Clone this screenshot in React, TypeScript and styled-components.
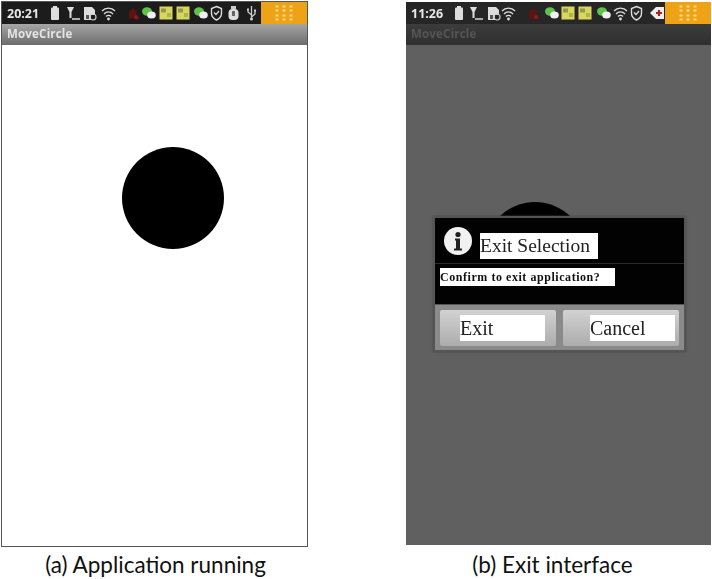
import React from 'react';
import styled, { createGlobalStyle } from 'styled-components';

const GlobalStyle = createGlobalStyle`
  html, body {
    margin: 0;
    padding: 0;
    background: #fff;
  }
  #root {
    width: 712px;
    height: 579px;
    overflow: hidden;
  }
`;

const Page = styled.div`
  display: grid;
  grid-template-columns: 309px 305px;
  justify-content: space-between;
  width: 712px;
  height: 579px;
  padding: 1px 1px 0 0;
  box-sizing: border-box;
  font-family: 'Lato', 'Open Sans', sans-serif;
`;

const Figure = styled.figure<{ $top: number }>`
  margin: 0;
  padding-top: ${(p) => p.$top}px;
  display: flex;
  flex-direction: column;
  align-items: center;
`;

const Phone = styled.div<{ $dim?: boolean }>`
  position: relative;
  width: ${(p) => (p.$dim ? 305 : 307)}px;
  height: ${(p) => (p.$dim ? 543 : 546)}px;
  box-sizing: border-box;
  display: flex;
  flex-direction: column;
  overflow: hidden;
  background: ${(p) => (p.$dim ? '#606060' : '#fff')};
  border: ${(p) => (p.$dim ? 'none' : '1px solid #555')};
`;

const StatusBar = styled.div<{ $dim?: boolean }>`
  height: 22px;
  flex: none;
  display: flex;
  align-items: center;
  background: ${(p) => (p.$dim ? '#262626' : '#1c1c1c')};
  color: #eee;
  padding-left: 5px;
`;

const Clock = styled.span`
  font: bold 12.5px 'Open Sans', sans-serif;
  color: #e8e8e8;
  width: 43px;
  flex: none;
  filter: blur(0.3px);
`;

const Tray = styled.div`
  flex: 1;
  display: flex;
  align-items: center;
  filter: blur(0.5px);
`;

const NotifyTile = styled.div`
  flex: none;
  width: 46px;
  height: 22px;
  background: #eda315;
  display: flex;
  align-items: center;
  justify-content: center;
`;

const TitleBar = styled.div<{ $dim?: boolean }>`
  height: 21px;
  flex: none;
  box-sizing: border-box;
  padding: 2px 0 0 5px;
  font: bold 11.5px 'Open Sans', sans-serif;
  letter-spacing: 0.2px;
  color: ${(p) => (p.$dim ? '#555' : '#e4e4e4')};
  background: ${(p) =>
    p.$dim
      ? 'linear-gradient(#3c3c3c, #2f2f2f)'
      : 'linear-gradient(#a6a6a6, #6c6c6c)'};
  filter: blur(0.4px);
`;

const Circle = styled.div<{ $x: number; $y: number }>`
  position: absolute;
  left: ${(p) => p.$x}px;
  top: ${(p) => p.$y}px;
  width: 102px;
  height: 102px;
  border-radius: 50%;
  background: #000;
`;

const Dialog = styled.div`
  position: absolute;
  left: 27px;
  top: 214px;
  width: 253px;
  height: 136px;
  box-sizing: border-box;
  padding: 2px;
  background: #555;
  display: flex;
  flex-direction: column;
  font-family: 'Liberation Serif', serif;
  box-shadow: 0 0 2px #444;
  filter: blur(0.35px);
`;

const DialogBody = styled.div`
  height: 86px;
  flex: none;
  background: #020202;
  display: flex;
  flex-direction: column;
`;

const DialogHeader = styled.div`
  height: 46px;
  flex: none;
  box-sizing: border-box;
  padding: 15px 0 0 8px;
  display: flex;
  gap: 7px;
  border-bottom: 1px solid #2b2b2b;
`;

const InfoIcon = styled.svg`
  width: 30px;
  height: 30px;
  flex: none;
  margin-top: -7px;
`;

const DialogTitle = styled.div`
  width: 118px;
  height: 26px;
  background: #fff;
  color: #222;
  font-size: 19.5px;
  line-height: 25px;
  white-space: nowrap;
`;

const Message = styled.div`
  width: 175px;
  height: 18px;
  margin: 4px 0 0 5px;
  background: #fff;
  color: #111;
  font-size: 12px;
  font-weight: bold;
  letter-spacing: 0.55px;
  line-height: 18px;
  white-space: nowrap;
`;

const ButtonBar = styled.div`
  flex: 1;
  margin-top: 1px;
  background: #8a8a8a;
  display: grid;
  grid-template-columns: 1fr 1fr;
  gap: 7px;
  padding: 5px 5px 4px;
`;

const DialogButton = styled.div<{ $inset: number }>`
  box-sizing: border-box;
  display: flex;
  align-items: center;
  justify-content: flex-end;
  background: linear-gradient(#d2d2d2, #acacac);
  border-radius: 2px;
  padding-right: ${(p) => p.$inset}px;
`;

const ButtonLabel = styled.div`
  width: 85px;
  height: 26px;
  background: #fff;
  color: #222;
  font-size: 20px;
  line-height: 27px;
`;

const Caption = styled.figcaption<{ $shift: number; $gap: number }>`
  margin-top: ${(p) => p.$gap}px;
  font-size: 22.5px;
  line-height: 30px;
  color: #111;
  white-space: nowrap;
  transform: translateX(${(p) => p.$shift}px);
`;

const Icon = styled.svg<{ $w: number; $gap?: number }>`
  width: ${(p) => p.$w}px;
  height: 18px;
  flex: none;
  margin-right: ${(p) => p.$gap ?? 3}px;
`;

type IconProps = { gap?: number };

const Battery = ({ gap }: IconProps) => (
  <Icon $w={10} $gap={gap} viewBox="0 0 10 18">
    <rect x="3" y="2" width="4" height="2" fill="#ddd" />
    <rect x="1" y="3.5" width="8" height="12.5" rx="1" fill="#ddd" />
  </Icon>
);

const Signal = ({ gap }: IconProps) => (
  <Icon $w={14} $gap={gap} viewBox="0 0 14 18">
    <path d="M1 3h7L5.5 8v6h-2V8z" fill="#ddd" />
    <rect x="6" y="14" width="8" height="2" fill="#aaa" />
  </Icon>
);

const SdCard = ({ gap }: IconProps) => (
  <Icon $w={14} $gap={gap} viewBox="0 0 14 18">
    <path d="M1 3h8l3 3v5H8v5H1z" fill="#ddd" />
    <circle cx="10" cy="13" r="3" fill="none" stroke="#ccc" strokeWidth="1.2" />
    <rect x="3" y="11" width="3" height="4" fill="#555" />
  </Icon>
);

const Wifi = ({ gap }: IconProps) => (
  <Icon $w={15} $gap={gap} viewBox="0 0 15 18">
    <g fill="none" stroke="#ddd" strokeWidth="1.3">
      <path d="M1 7a9 9 0 0 1 13 0" />
      <path d="M3 10a6 6 0 0 1 9 0" />
      <path d="M5 12.5a3.4 3.4 0 0 1 5 0" />
    </g>
    <circle cx="7.5" cy="15" r="1.4" fill="#ddd" />
  </Icon>
);

const RedBlob = ({ gap }: IconProps) => (
  <Icon $w={15} $gap={gap} viewBox="0 0 15 18">
    <path d="M3 8l4-4 4 3-1 4 4 3-4 2-3-2-4 1z" fill="#5e1212" />
    <circle cx="10" cy="13" r="2" fill="#8e1a1a" />
  </Icon>
);

const Chat = ({ gap }: IconProps) => (
  <Icon $w={15} $gap={gap} viewBox="0 0 15 18">
    <ellipse cx="6" cy="7.5" rx="5" ry="4.2" fill="#5fc24a" />
    <ellipse cx="10.5" cy="11" rx="4.3" ry="3.6" fill="#f0f0f0" />
  </Icon>
);

const Tile = ({ gap }: IconProps) => (
  <Icon $w={14} $gap={gap} viewBox="0 0 14 18">
    <rect x="0.5" y="2.5" width="13" height="13" fill="#d9d65c" />
    <rect x="2" y="4.5" width="5" height="4" fill="#8d9a55" />
    <rect x="8" y="9" width="4" height="4" fill="#a9b64f" />
  </Icon>
);

const Shield = ({ gap }: IconProps) => (
  <Icon $w={13} $gap={gap} viewBox="0 0 13 18">
    <path
      d="M6.5 2.5l5 2v5c0 3-2 5-5 6.5-3-1.5-5-3.5-5-6.5v-5z"
      fill="none"
      stroke="#ddd"
      strokeWidth="1.4"
    />
    <path d="M4 8.5l2 2 3-3.5" fill="none" stroke="#ddd" strokeWidth="1.2" />
  </Icon>
);

const Plug = ({ gap }: IconProps) => (
  <Icon $w={13} $gap={gap} viewBox="0 0 13 18">
    <rect x="4" y="2" width="5" height="3" fill="#ccc" />
    <rect x="1.5" y="5" width="10" height="11" rx="4" fill="#ddd" />
    <rect x="5" y="7" width="3" height="5" fill="#666" />
  </Icon>
);

const Usb = ({ gap }: IconProps) => (
  <Icon $w={11} $gap={gap} viewBox="0 0 11 18">
    <path
      d="M5.5 2v14M5.5 11L2 8V6M5.5 13l3.5-3V7"
      fill="none"
      stroke="#ccc"
      strokeWidth="1.3"
    />
    <circle cx="5.5" cy="15" r="1.5" fill="#ccc" />
    <rect x="1" y="4.5" width="2" height="2" fill="#ccc" />
    <rect x="8" y="5.5" width="2" height="2" fill="#ccc" />
  </Icon>
);

const Alert = ({ gap }: IconProps) => (
  <Icon $w={16} $gap={gap} viewBox="0 0 16 18">
    <path d="M1 9l6-6h8v12H7z" fill="#eee" />
    <path d="M7 9h6M10 6v6" stroke="#a52222" strokeWidth="2.2" />
  </Icon>
);

const DotGrid = () => (
  <svg width="18" height="16" viewBox="0 0 18 16">
    {[1.5, 5.5, 10.5, 14.5].flatMap((y) =>
      [2, 9, 16].map((x) => (
        <rect key={`${x}-${y}`} x={x - 1.5} y={y - 1} width="3" height="2" fill="#f5d98a" />
      )),
    )}
  </svg>
);

export default function App() {
  return (
    <>
      <GlobalStyle />
      <Page>
        <Figure $top={0}>
          <Phone>
            <StatusBar>
              <Clock>20:21</Clock>
              <Tray>
                <Battery gap={6} />
                <Signal gap={3} />
                <SdCard gap={4} />
                <Wifi gap={10} />
                <RedBlob gap={0} />
                <Chat gap={3} />
                <Tile gap={3} />
                <Tile gap={3} />
                <Chat gap={2} />
                <Shield gap={4} />
                <Plug gap={6} />
                <Usb gap={0} />
              </Tray>
              <NotifyTile>
                <DotGrid />
              </NotifyTile>
            </StatusBar>
            <TitleBar>MoveCircle</TitleBar>
            <Circle $x={120} $y={145} />
          </Phone>
          <Caption $shift={1} $gap={3}>
            (a) Application running
          </Caption>
        </Figure>

        <Figure $top={1}>
          <Phone $dim>
            <StatusBar $dim>
              <Clock>11:26</Clock>
              <Tray>
                <Battery gap={5} />
                <Signal gap={4} />
                <SdCard gap={0} />
                <Wifi gap={10} />
                <RedBlob gap={3} />
                <Chat gap={2} />
                <Tile gap={3} />
                <Tile gap={4} />
                <Chat gap={2} />
                <Wifi gap={2} />
                <Shield gap={6} />
                <Alert gap={0} />
              </Tray>
              <NotifyTile>
                <DotGrid />
              </NotifyTile>
            </StatusBar>
            <TitleBar $dim>MoveCircle</TitleBar>
            <Circle $x={78} $y={200} />
            <Dialog>
              <DialogBody>
                <DialogHeader>
                  <InfoIcon viewBox="0 0 30 30">
                    <circle cx="15" cy="15" r="14" fill="#f1f1f1" />
                    <circle cx="15" cy="8.5" r="2.6" fill="#222" />
                    <path d="M12 12.5h5v10h2v2h-8v-2h2v-8h-1z" fill="#222" />
                  </InfoIcon>
                  <DialogTitle>Exit Selection</DialogTitle>
                </DialogHeader>
                <Message>Confirm to exit application?</Message>
              </DialogBody>
              <ButtonBar>
                <DialogButton $inset={11}>
                  <ButtonLabel>Exit</ButtonLabel>
                </DialogButton>
                <DialogButton $inset={4}>
                  <ButtonLabel>Cancel</ButtonLabel>
                </DialogButton>
              </ButtonBar>
            </Dialog>
          </Phone>
          <Caption $shift={-6} $gap={5}>
            (b) Exit interface
          </Caption>
        </Figure>
      </Page>
    </>
  );
}
